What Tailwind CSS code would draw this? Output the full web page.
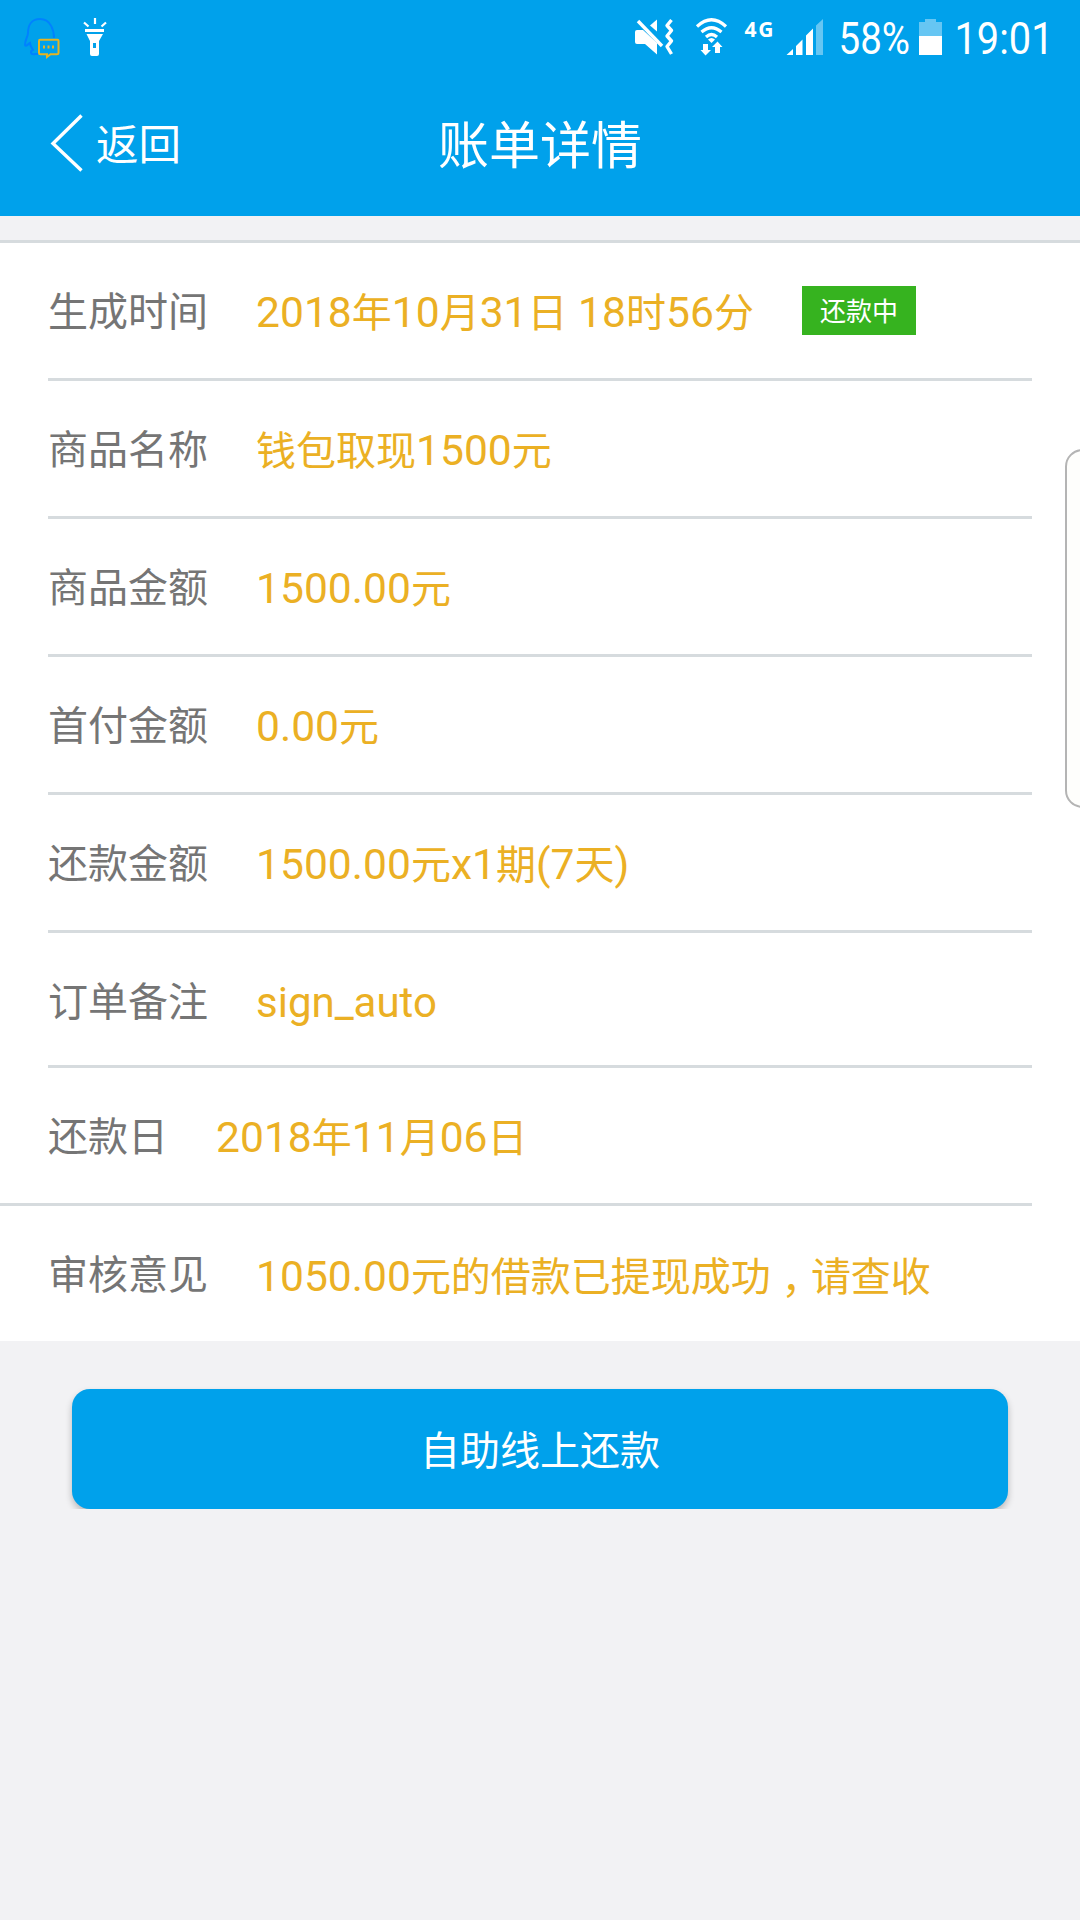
<!DOCTYPE html>
<html lang="zh-CN">
<head>
    <meta charset="UTF-8">
    <meta name="viewport" content="width=device-width, initial-scale=1.0">
    <title>账单详情</title>
    <script src="https://cdn.jsdelivr.net/npm/@tailwindcss/browser@4"></script>
</head>

<body class="relative h-[1920px] w-[1080px] overflow-hidden bg-[#f2f2f4] font-['Roboto','Noto_Sans_CJK_SC',sans-serif] text-[40px] leading-none text-[#757575]">
    <header class="h-[216px] bg-[#00a1eb] text-white">
        <!-- status bar -->
        <div class="flex h-[72px] justify-between">
            <svg class="h-[72px] w-[120px]" viewBox="0 0 120 72" fill="none">
                <path d="M54 38C54 31 51 19 40 19C31 19 28 26 28 33C28 37 25 39 25 45C26 47 28 44 30 43C30 46 32 48 33 50C30 51 30 55 35 54H38" stroke="#0082ff" stroke-width="2" />
                <path d="M40 39.7H57.5Q58.5 39.7 58.5 41V53Q58.5 54.3 57 54.3H50.5L47 57V54.3H40.5Q39 54.3 39 53V41Q39 39.7 40 39.7Z" stroke="#e6b422" stroke-width="2" />
                <path d="M43 45.5h2v3h-2zM47.5 45.5h2v3h-2zM52 45.5h2v3h-2z" fill="#e6b422" />
                <path d="M95 18V24M84 22.5L88.5 26.5M106 22.5L101.5 26.5" stroke="#fff" stroke-width="2.2" />
                <path d="M85 29h19v3H85z" fill="#fff" />
                <path fill-rule="evenodd" d="M86.5 34H103L99 41V54Q99 56 97 56H92Q90 56 90 54V41ZM93 43V48H96V43Z" fill="#fff" />
            </svg>
            <svg class="h-[72px] w-[460px]" viewBox="620 0 460 72" fill="none">
                <!-- muted, vibrate -->
                <path d="M637 30H643L657 43V54.5L645 44H637Q635 44 635 42V32Q635 30 637 30Z" fill="#fff" />
                <path d="M657 19.5V31.5L650 25.5Z" fill="#fff" />
                <path d="M638 21L662 46" stroke="#fff" stroke-width="3.4" />
                <path d="M671.5 20L667 25.5L671.5 30.5L667 36L671.5 41L667 46.500L671.5 54" stroke="#fff" stroke-width="3.4" stroke-linejoin="round" />
                <!-- wifi -->
                <path d="M697 26.5Q711.5 13 726 26.5M701.5 32Q711.5 23.5 721.5 32M706 37Q711.5 32 717 37" stroke="#fff" stroke-width="3.2" />
                <path d="M708 39.5Q711.5 36.5 715 39.5L711.5 43Z" fill="#fff" />
                <path d="M703 44H708V50H711L705.5 55.5L700.5 50H703ZM715 53V47H712L717.5 41.5L722.5 47H720V53Z" fill="#fff" />
                <text x="744.5" y="36.5" textLength="29" font-family="Open Sans" font-weight="700" font-size="21" fill="#fff">4G</text>
                <!-- signal -->
                <path d="M786.5 55L793 49V55ZM796 55V46L802.5 39.5V55ZM806 55V35.5L813 28.5V55Z" fill="#fff" />
                <path d="M816 55V25.5L823 19V55Z" fill="#fff" fill-opacity=".4" />
                <text x="838.5" y="54" textLength="71.5" lengthAdjust="spacingAndGlyphs" font-family="Roboto" font-size="44.5" fill="#fff">58%</text>
                <!-- battery -->
                <path d="M925 19H936V22H942V36H919V22H925Z" fill="#fff" fill-opacity=".4" />
                <path d="M919 36h23v19h-23z" fill="#fff" />
                <text x="954.5" y="54" textLength="99" lengthAdjust="spacingAndGlyphs" font-family="Roboto" font-size="44.5" fill="#fff">19:01</text>
            </svg>
        </div>
        <!-- title bar -->
        <div class="grid h-[144px] grid-cols-3 items-center pb-[2px]">
            <div class="flex items-center gap-[13px] pl-[50px] text-[42.5px]">
                <svg class="h-[58px] w-[33px]" viewBox="0 0 33 58" fill="none" stroke="#fff" stroke-width="3.4">
                    <path d="M31.5 1.5L3 29.5L31.5 56.5" />
                </svg>
                <span class="pt-[6px]">返回</span>
            </div>
            <h1 class="pt-[6px] text-center text-[51px]">账单详情</h1>
        </div>
    </header>

    <main class="mt-6 border-t-3 border-[#d6dbde] bg-white">
        <div class="mx-12 flex h-[138px] items-center gap-12 border-b-3 border-[#d6dbde]">
            <span class="pt-[5px]">生成时间</span>
            <div class="flex items-center gap-12">
                <p class="pt-[4px] whitespace-nowrap text-[#ebb024]"><span class="text-[42.6px]">2018</span>年<span class="text-[42.6px]">10</span>月<span class="text-[42.6px]">31</span>日<span class="text-[42.6px]"> 18</span>时<span class="text-[42.6px]">56</span>分</p>
                <span class="flex h-[49px] w-[114px] items-center justify-center bg-[#36b31f] pt-[2px] text-[26px] text-white">还款中</span>
            </div>
        </div>
        <div class="mx-12 flex h-[138px] items-center gap-12 border-b-3 border-[#d6dbde]">
            <span class="pt-[5px]">商品名称</span>
            <p class="pt-[4px] text-[#ebb024]">钱包取现<span class="text-[42.6px]">1500</span>元</p>
        </div>
        <div class="mx-12 flex h-[138px] items-center gap-12 border-b-3 border-[#d6dbde]">
            <span class="pt-[5px]">商品金额</span>
            <p class="pt-[4px] text-[#ebb024]"><span class="text-[42.6px]">1500.00</span>元</p>
        </div>
        <div class="mx-12 flex h-[138px] items-center gap-12 border-b-3 border-[#d6dbde]">
            <span class="pt-[5px]">首付金额</span>
            <p class="pt-[4px] text-[#ebb024]"><span class="text-[42.6px]">0.00</span>元</p>
        </div>
        <div class="mx-12 flex h-[138px] items-center gap-12 border-b-3 border-[#d6dbde]">
            <span class="pt-[5px]">还款金额</span>
            <p class="pt-[4px] text-[#ebb024]"><span class="text-[42.6px]">1500.00</span>元<span class="text-[42.6px]">x1</span>期<span class="text-[42.6px]">(7</span>天<span class="text-[42.6px]">)</span></p>
        </div>
        <div class="mx-12 flex h-[135px] items-center gap-12 border-b-3 border-[#d6dbde]">
            <span class="pt-[8px]">订单备注</span>
            <p class="pt-[7px] text-[42px] text-[#ebb024]">sign_auto</p>
        </div>
        <div class="mr-12 flex h-[138px] items-center gap-12 border-b-3 border-[#d6dbde] pl-12">
            <span class="pt-[5px]">还款日</span>
            <p class="pt-[4px] text-[#ebb024]"><span class="text-[42.6px]">2018</span>年<span class="text-[42.6px]">11</span>月<span class="text-[42.6px]">06</span>日</p>
        </div>
        <div class="mx-12 flex h-[135px] items-center gap-12">
            <span class="pt-[5px]">审核意见</span>
            <p class="pt-[4px] whitespace-nowrap text-[#ebb024]"><span class="text-[42.6px]">1050.00</span>元的借款已提现成功<span lang="zh-TW" class="inline-block translate-y-[14px] font-['Noto_Sans_CJK_TC',sans-serif]">，</span>请查收</p>
        </div>
    </main>

    <!-- the shadow is cut off at the bottom of the button -->
    <div class="mt-[38px] overflow-hidden px-[72px] pt-[10px]">
        <button class="block h-[120px] w-full rounded-[18px] bg-[#00a1eb] pt-[5px] text-[40px] text-white shadow-[0_4px_7px_rgba(0,0,0,0.24)]">自助线上还款</button>
    </div>

    <!-- edge panel handle -->
    <div class="absolute top-[449px] -right-[20px] h-[359px] w-[35px] rounded-[20px] border-2 border-[#b4b4b4] bg-[#fefefc]"></div>
</body>
</html>
